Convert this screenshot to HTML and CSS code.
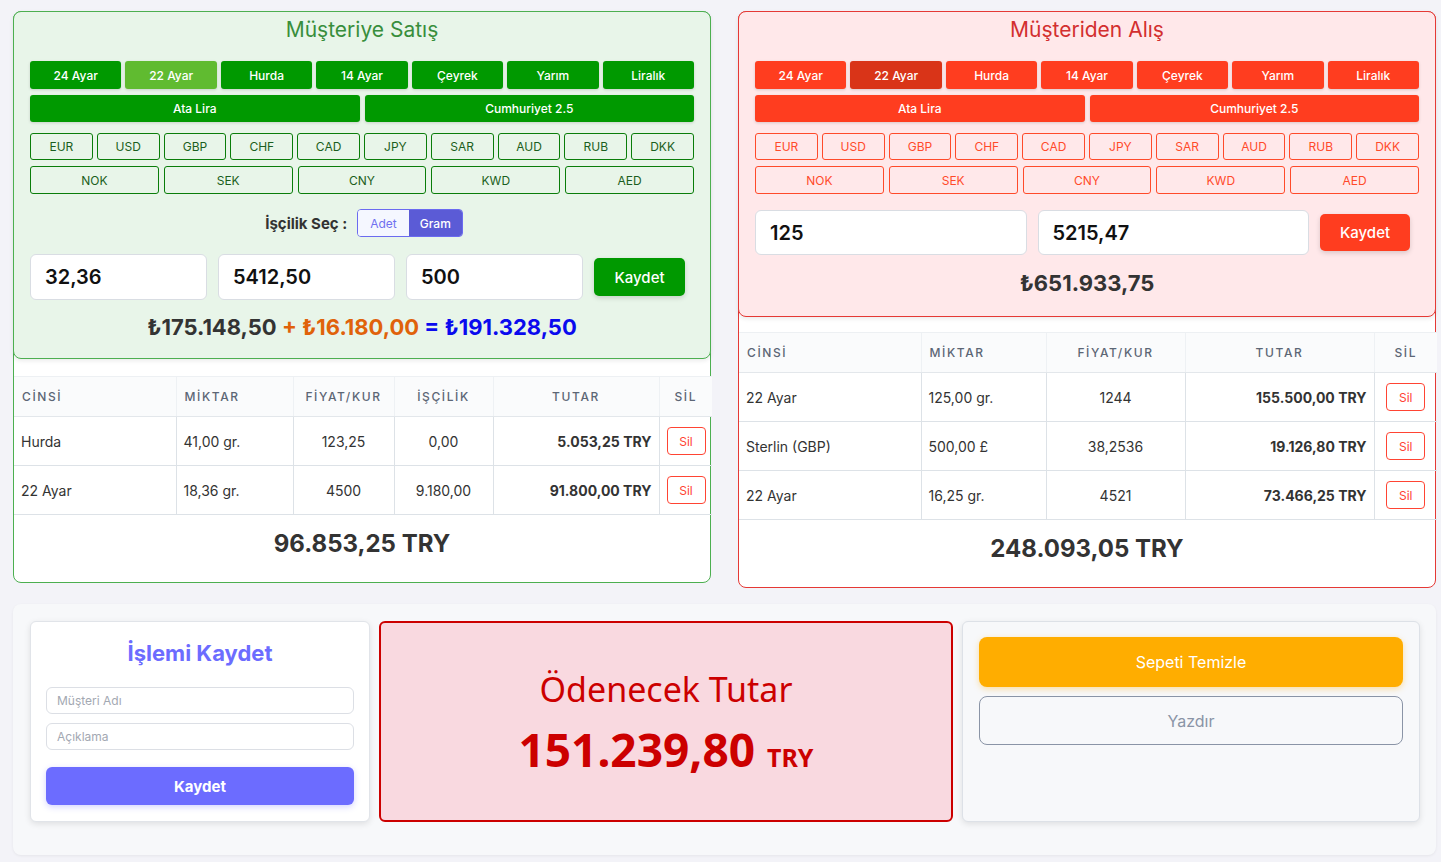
FILE: index.html
```html
<!DOCTYPE html>
<html lang="tr">
<head>
<meta charset="utf-8">
<title>Kasa</title>
<link rel="stylesheet" href="styles.css">
</head>
<body>
<div class="page">
  <div class="top-row">
    <section class="panel panel-green">
      <div class="entry entry-green">
        <h2 class="entry-title">Müşteriye Satış</h2>
        <div class="btn-row row7">
          <button class="gold">24 Ayar</button>
          <button class="gold active">22 Ayar</button>
          <button class="gold">Hurda</button>
          <button class="gold">14 Ayar</button>
          <button class="gold">Çeyrek</button>
          <button class="gold">Yarım</button>
          <button class="gold">Liralık</button>
        </div>
        <div class="btn-row row2">
          <button class="gold">Ata Lira</button>
          <button class="gold">Cumhuriyet 2.5</button>
        </div>
        <div class="btn-row row10 cur-row">
          <button class="cur">EUR</button><button class="cur">USD</button><button class="cur">GBP</button><button class="cur">CHF</button><button class="cur">CAD</button><button class="cur">JPY</button><button class="cur">SAR</button><button class="cur">AUD</button><button class="cur">RUB</button><button class="cur">DKK</button>
        </div>
        <div class="btn-row row5">
          <button class="cur">NOK</button><button class="cur">SEK</button><button class="cur">CNY</button><button class="cur">KWD</button><button class="cur">AED</button>
        </div>
        <div class="labor">
          <span class="labor-label">İşçilik Seç :</span>
          <div class="toggle">
            <span class="toggle-opt">Adet</span>
            <span class="toggle-opt on">Gram</span>
          </div>
        </div>
        <div class="input-row">
          <div class="num-input">32,36</div>
          <div class="num-input">5412,50</div>
          <div class="num-input">500</div>
          <button class="save save-green">Kaydet</button>
        </div>
        <div class="sum-line"><span class="s-base">₺175.148,50</span> <span class="s-labor">+ ₺16.180,00</span> <span class="s-total">= ₺191.328,50</span></div>
      </div>
      <table class="items items-sale">
        <colgroup><col class="c1"><col class="c2"><col class="c3"><col class="c4"><col class="c5"><col class="c6"></colgroup>
        <thead>
          <tr><th class="l">Cinsi</th><th class="l">Miktar</th><th>Fiyat/Kur</th><th>İşçilik</th><th>Tutar</th><th>Sil</th></tr>
        </thead>
        <tbody>
          <tr><td class="l">Hurda</td><td class="l">41,00 gr.</td><td>123,25</td><td>0,00</td><td class="r b">5.053,25 TRY</td><td><button class="del">Sil</button></td></tr>
          <tr><td class="l">22 Ayar</td><td class="l">18,36 gr.</td><td>4500</td><td>9.180,00</td><td class="r b">91.800,00 TRY</td><td><button class="del">Sil</button></td></tr>
        </tbody>
      </table>
      <div class="grand">96.853,25 TRY</div>
    </section>

    <section class="panel panel-red">
      <div class="entry entry-red">
        <h2 class="entry-title">Müşteriden Alış</h2>
        <div class="btn-row row7">
          <button class="gold">24 Ayar</button>
          <button class="gold active">22 Ayar</button>
          <button class="gold">Hurda</button>
          <button class="gold">14 Ayar</button>
          <button class="gold">Çeyrek</button>
          <button class="gold">Yarım</button>
          <button class="gold">Liralık</button>
        </div>
        <div class="btn-row row2">
          <button class="gold">Ata Lira</button>
          <button class="gold">Cumhuriyet 2.5</button>
        </div>
        <div class="btn-row row10 cur-row">
          <button class="cur">EUR</button><button class="cur">USD</button><button class="cur">GBP</button><button class="cur">CHF</button><button class="cur">CAD</button><button class="cur">JPY</button><button class="cur">SAR</button><button class="cur">AUD</button><button class="cur">RUB</button><button class="cur">DKK</button>
        </div>
        <div class="btn-row row5 row5-red">
          <button class="cur">NOK</button><button class="cur">SEK</button><button class="cur">CNY</button><button class="cur">KWD</button><button class="cur">AED</button>
        </div>
        <div class="input-row input-row-red">
          <div class="num-input">125</div>
          <div class="num-input">5215,47</div>
          <button class="save save-red">Kaydet</button>
        </div>
        <div class="sum-line sum-red"><span class="s-base">₺651.933,75</span></div>
      </div>
      <table class="items items-buy">
        <colgroup><col class="d1"><col class="d2"><col class="d3"><col class="d4"><col class="d5"></colgroup>
        <thead>
          <tr><th class="l">Cinsi</th><th class="l">Miktar</th><th>Fiyat/Kur</th><th>Tutar</th><th>Sil</th></tr>
        </thead>
        <tbody>
          <tr><td class="l">22 Ayar</td><td class="l">125,00 gr.</td><td>1244</td><td class="r b">155.500,00 TRY</td><td><button class="del">Sil</button></td></tr>
          <tr><td class="l">Sterlin (GBP)</td><td class="l">500,00 £</td><td>38,2536</td><td class="r b">19.126,80 TRY</td><td><button class="del">Sil</button></td></tr>
          <tr><td class="l">22 Ayar</td><td class="l">16,25 gr.</td><td>4521</td><td class="r b">73.466,25 TRY</td><td><button class="del">Sil</button></td></tr>
        </tbody>
      </table>
      <div class="grand">248.093,05 TRY</div>
    </section>
  </div>

  <div class="bottom">
    <div class="card card-save">
      <h3 class="save-title">İşlemi Kaydet</h3>
      <div class="text-input">Müşteri Adı</div>
      <div class="text-input">Açıklama</div>
      <button class="save-main">Kaydet</button>
    </div>
    <div class="card card-pay">
      <div class="pay-title">Ödenecek Tutar</div>
      <div class="pay-amount">151.239,80 <span class="pay-cur">TRY</span></div>
    </div>
    <div class="card card-actions">
      <button class="act act-clear">Sepeti Temizle</button>
      <button class="act act-print">Yazdır</button>
    </div>
  </div>
</div>
</body>
</html>
```

FILE: styles.css
```css
* { box-sizing: border-box; }
html, body { margin: 0; padding: 0; }
body {
  background: #f3f3f8;
  font-family: Inter, "Noto Sans", "Liberation Sans", sans-serif;
  color: #333;
  width: 1441px;
  height: 862px;
  overflow: hidden;
}
button { font-family: inherit; cursor: pointer; }
.page { padding: 11px 5px 0 13px; }

.top-row {
  display: grid;
  grid-template-columns: 698px 698px;
  column-gap: 27px;
  align-items: start;
}
.panel {
  background: #fff;
  border: 1px solid;
  border-radius: 8px;
}
.panel-green { border-color: #4caf50; }
.panel-red { border-color: #e53935; }

.entry {
  margin: -1px -1px 0 -1px;
  border: 1px solid;
  border-radius: 8px;
  padding: 4px 16px 0 16px;
  box-shadow: 0 2px 4px rgba(0,0,0,0.08);
}
.entry-green { background: #e8f5e9; border-color: #4caf50; padding-bottom: 18px; }
.entry-red { background: #ffe8ea; border-color: #e53935; padding-bottom: 20px; }

.entry-title {
  margin: 0 0 17px 0;
  font-size: 21px;
  line-height: 28px;
  font-weight: 400;
  text-align: center;
}
.entry-green .entry-title { color: #388e3c; }
.entry-red .entry-title { color: #d32f2f; }

.btn-row { display: grid; gap: 4px; margin-bottom: 6px; }
.row7 { grid-template-columns: repeat(7, 1fr); }
.row2 { grid-template-columns: repeat(2, 1fr); gap: 5px; margin-bottom: 11px; }
.row10 { grid-template-columns: repeat(10, 1fr); }
.row5 { grid-template-columns: repeat(5, 1fr); gap: 5px; margin-bottom: 15px; }
.row5-red { margin-bottom: 16px; }

.gold {
  height: 28px;
  border: none;
  border-radius: 3px;
  color: #fff;
  font-size: 12px;
  font-weight: 500;
  box-shadow: 0 1px 3px rgba(0,0,0,0.15);
}
.row2 .gold { height: 27px; }
.entry-green .gold { background: #009900; }
.entry-green .gold.active { background: #60bb30; }
.entry-red .gold { background: #ff3d1f; }
.entry-red .gold.active { background: #d93418; }

.cur {
  height: 28px;
  background: transparent;
  border: 1px solid;
  border-radius: 3px;
  font-size: 12px;
}
.cur-row .cur { height: 27px; }
.entry-green .cur { border-color: #0a7d0a; color: #1b5e20; }
.entry-red .cur { border-color: #ff4a2a; color: #ff4a2a; }

.labor {
  display: flex;
  justify-content: center;
  align-items: center;
  gap: 10px;
  margin-bottom: 17px;
  padding-left: 4px;
}
.labor-label { font-size: 15px; font-weight: 700; color: #333; }
.toggle {
  display: flex;
  height: 28px;
  border: 1px solid #6b6bf0;
  border-radius: 4px;
  overflow: hidden;
}
.toggle-opt {
  display: flex;
  align-items: center;
  padding: 0 12px;
  font-size: 12px;
  color: #7070f0;
  background: #f5f7ff;
}
.toggle-opt.on { background: #5b5bd6; color: #fff; font-weight: 500; padding: 0 11px; }

.input-row {
  display: flex;
  align-items: center;
  gap: 11px;
  padding-right: 9px;
  margin-bottom: 14px;
}
.num-input {
  flex: 1;
  height: 46px;
  background: #fff;
  border: 1px solid #d9dde3;
  border-radius: 6px;
  padding: 0 14px;
  display: flex;
  align-items: center;
  font-size: 20px;
  font-weight: 600;
  color: #111;
}
.input-row-red { margin-bottom: 15px; }
.input-row-red .num-input { height: 45px; }
.save {
  flex: 0 0 91px;
  height: 38px;
  border: none;
  border-radius: 5px;
  color: #fff;
  font-size: 15px;
  font-weight: 500;
  box-shadow: 0 2px 5px rgba(0,0,0,0.15);
}
.save-red { flex-basis: 90px; height: 37px; }
.save-green { background: #009900; }
.save-red { background: #ff3d1f; }

.sum-line {
  text-align: center;
  font-size: 22px;
  line-height: 26px;
  font-weight: 700;
}
.s-base { color: #333; }
.s-labor { color: #e0620a; }
.s-total { color: #0a0aee; }

.items {
  width: 100%;
  border-collapse: collapse;
  table-layout: fixed;
  font-size: 14px;
}
.items-sale { margin-top: 17px; }
.items-buy { margin-top: 15px; }
.c1 { width: 162px; } .c2 { width: 117px; } .c3 { width: 101px; }
.c4 { width: 99px; } .c5 { width: 166px; } .c6 { width: 53px; }
.d1 { width: 182px; } .d2 { width: 125px; } .d3 { width: 139px; }
.d4 { width: 189px; } .d5 { width: 63px; }
.items th {
  height: 40px;
  background: #fafbfc;
  font-size: 12px;
  font-weight: 500;
  letter-spacing: 1.6px;
  text-transform: uppercase;
  color: #5c6675;
  border-top: 1px solid #edf0f3;
  border-bottom: 1px solid #e3e7eb;
  text-align: center;
  padding: 0 8px;
}
.items td {
  height: 49px;
  border-bottom: 1px solid #dde2e7;
  text-align: center;
  padding: 0 7px;
  color: #333;
}
.items th + th { border-left: 1px solid #eef1f4; }
.items td + td { border-left: 1px solid #dde2e7; }
.items .l { text-align: left; }
.items .r { text-align: right; }
.items .b { font-weight: 700; }
.del {
  width: 39px;
  height: 28px;
  background: #fff;
  border: 1px solid #ff4433;
  border-radius: 4px;
  color: #ff4433;
  font-size: 12px;
  padding: 0;
}

.grand {
  text-align: center;
  font-size: 24px;
  line-height: 30px;
  font-weight: 700;
  color: #333;
  padding: 14px 0 23px;
}

.bottom {
  margin-top: 16px;
  width: 1423px;
  background: #f7f8fa;
  border-radius: 8px;
  box-shadow: 0 1px 3px rgba(0,0,0,0.06);
  padding: 17px 16px 33px 17px;
  display: grid;
  grid-template-columns: 340px 1fr 458px;
  gap: 9px;
}
.card { border-radius: 6px; height: 201px; }
.card-save {
  background: #fff;
  border: 1px solid #e1e4e9;
  box-shadow: 0 2px 6px rgba(0,0,0,0.1);
  padding: 17px 15px 16px;
}
.save-title {
  margin: 0 0 20px;
  text-align: center;
  font-size: 22px;
  line-height: 28px;
  font-weight: 700;
  color: #6c6cff;
}
.text-input {
  height: 27px;
  border: 1px solid #dcdfe5;
  border-radius: 6px;
  background: #fff;
  padding: 0 10px;
  display: flex;
  align-items: center;
  font-size: 12px;
  color: #a3a8b2;
  margin-bottom: 9px;
}
.save-main {
  width: 100%;
  height: 38px;
  margin-top: 8px;
  border: none;
  border-radius: 6px;
  background: #6c6cff;
  color: #fff;
  font-size: 15px;
  font-weight: 700;
  box-shadow: 0 2px 6px rgba(108,108,255,0.3);
}
.card-pay {
  background: #f9d9e0;
  border: 2px solid #cc0000;
  display: flex;
  flex-direction: column;
  align-items: center;
  justify-content: center;
  font-family: "Noto Sans", "Open Sans", sans-serif;
  color: #cc0000;
  padding-top: 12px;
}
.pay-title { font-size: 34px; line-height: 46px; }
.pay-amount { font-size: 46px; line-height: 66px; font-weight: 700; margin-top: 4px; }
.pay-cur { font-size: 25px; }
.card-actions {
  background: #f7f8fa;
  border: 1px solid #dde1e7;
  box-shadow: 0 2px 6px rgba(0,0,0,0.1);
  padding: 15px 16px;
  display: flex;
  flex-direction: column;
  gap: 9px;
}
.act {
  height: 50px;
  border-radius: 8px;
  font-size: 16px;
}
.act-clear {
  background: #ffad00;
  border: none;
  color: #fff;
  box-shadow: 0 2px 6px rgba(255,173,0,0.35);
}
.act-print {
  height: 49px;
  background: transparent;
  border: 1px solid #8a94a6;
  color: #8a94a6;
}
```
